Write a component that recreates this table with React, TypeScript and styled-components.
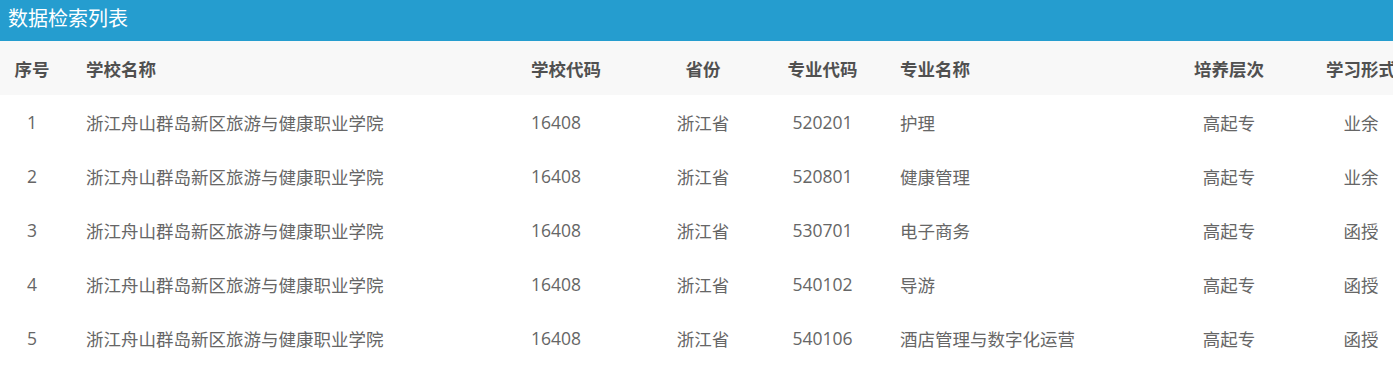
import React from "react";
import styled, { createGlobalStyle } from "styled-components";

const GlobalStyle = createGlobalStyle`
  html, body { margin: 0; padding: 0; background: #fff; }
  body { font-family: "Open Sans", "Noto Sans CJK SC", sans-serif; overflow: hidden; }
`;

const Panel = styled.section`
  width: 1393px;
  overflow: hidden;
`;

const TitleBar = styled.div`
  height: 41px;
  background: #259dcf;
  color: #fff;
  font-size: 20px;
  line-height: 38px;
  padding-left: 8px;
  box-sizing: border-box;
`;

const Table = styled.table`
  width: 1427px;
  table-layout: fixed;
  border-collapse: collapse;
  font-size: 17.5px;
`;

type CellProps = { $align: "left" | "center"; $pad?: number };

const Th = styled.th<CellProps>`
  height: 54px;
  padding: 0 0 0 ${(p) => p.$pad ?? 0}px;
  text-align: ${(p) => p.$align};
  font-weight: 700;
  color: #505050;
  background: #f8f8f8;
  white-space: nowrap;
`;

const Td = styled.td<CellProps>`
  height: 54px;
  padding: 0 0 0 ${(p) => p.$pad ?? 0}px;
  text-align: ${(p) => p.$align};
  color: #666;
  white-space: nowrap;
`;

type Col = { title: string; width: number; align: "left" | "center"; pad?: number };

const cols: Col[] = [
  { title: "序号", width: 64, align: "center" },
  { title: "学校名称", width: 445, align: "left", pad: 22 },
  { title: "学校代码", width: 128, align: "left", pad: 22 },
  { title: "省份", width: 132, align: "center" },
  { title: "专业代码", width: 107, align: "center" },
  { title: "专业名称", width: 287, align: "left", pad: 24 },
  { title: "培养层次", width: 132, align: "center" },
  { title: "学习形式", width: 132, align: "center" },
];

const school = "浙江舟山群岛新区旅游与健康职业学院";
const rows = [
  ["1", school, "16408", "浙江省", "520201", "护理", "高起专", "业余"],
  ["2", school, "16408", "浙江省", "520801", "健康管理", "高起专", "业余"],
  ["3", school, "16408", "浙江省", "530701", "电子商务", "高起专", "函授"],
  ["4", school, "16408", "浙江省", "540102", "导游", "高起专", "函授"],
  ["5", school, "16408", "浙江省", "540106", "酒店管理与数字化运营", "高起专", "函授"],
];

export default function App() {
  return (
    <>
      <GlobalStyle />
      <Panel>
        <TitleBar>数据检索列表</TitleBar>
        <Table>
          <colgroup>
            {cols.map((c) => (
              <col key={c.title} style={{ width: c.width }} />
            ))}
          </colgroup>
          <thead>
            <tr>
              {cols.map((c) => (
                <Th key={c.title} $align={c.align} $pad={c.pad}>
                  {c.title}
                </Th>
              ))}
            </tr>
          </thead>
          <tbody>
            {rows.map((r) => (
              <tr key={r[0]}>
                {r.map((v, i) => (
                  <Td key={i} $align={cols[i].align} $pad={cols[i].pad}>
                    {v}
                  </Td>
                ))}
              </tr>
            ))}
          </tbody>
        </Table>
      </Panel>
    </>
  );
}
